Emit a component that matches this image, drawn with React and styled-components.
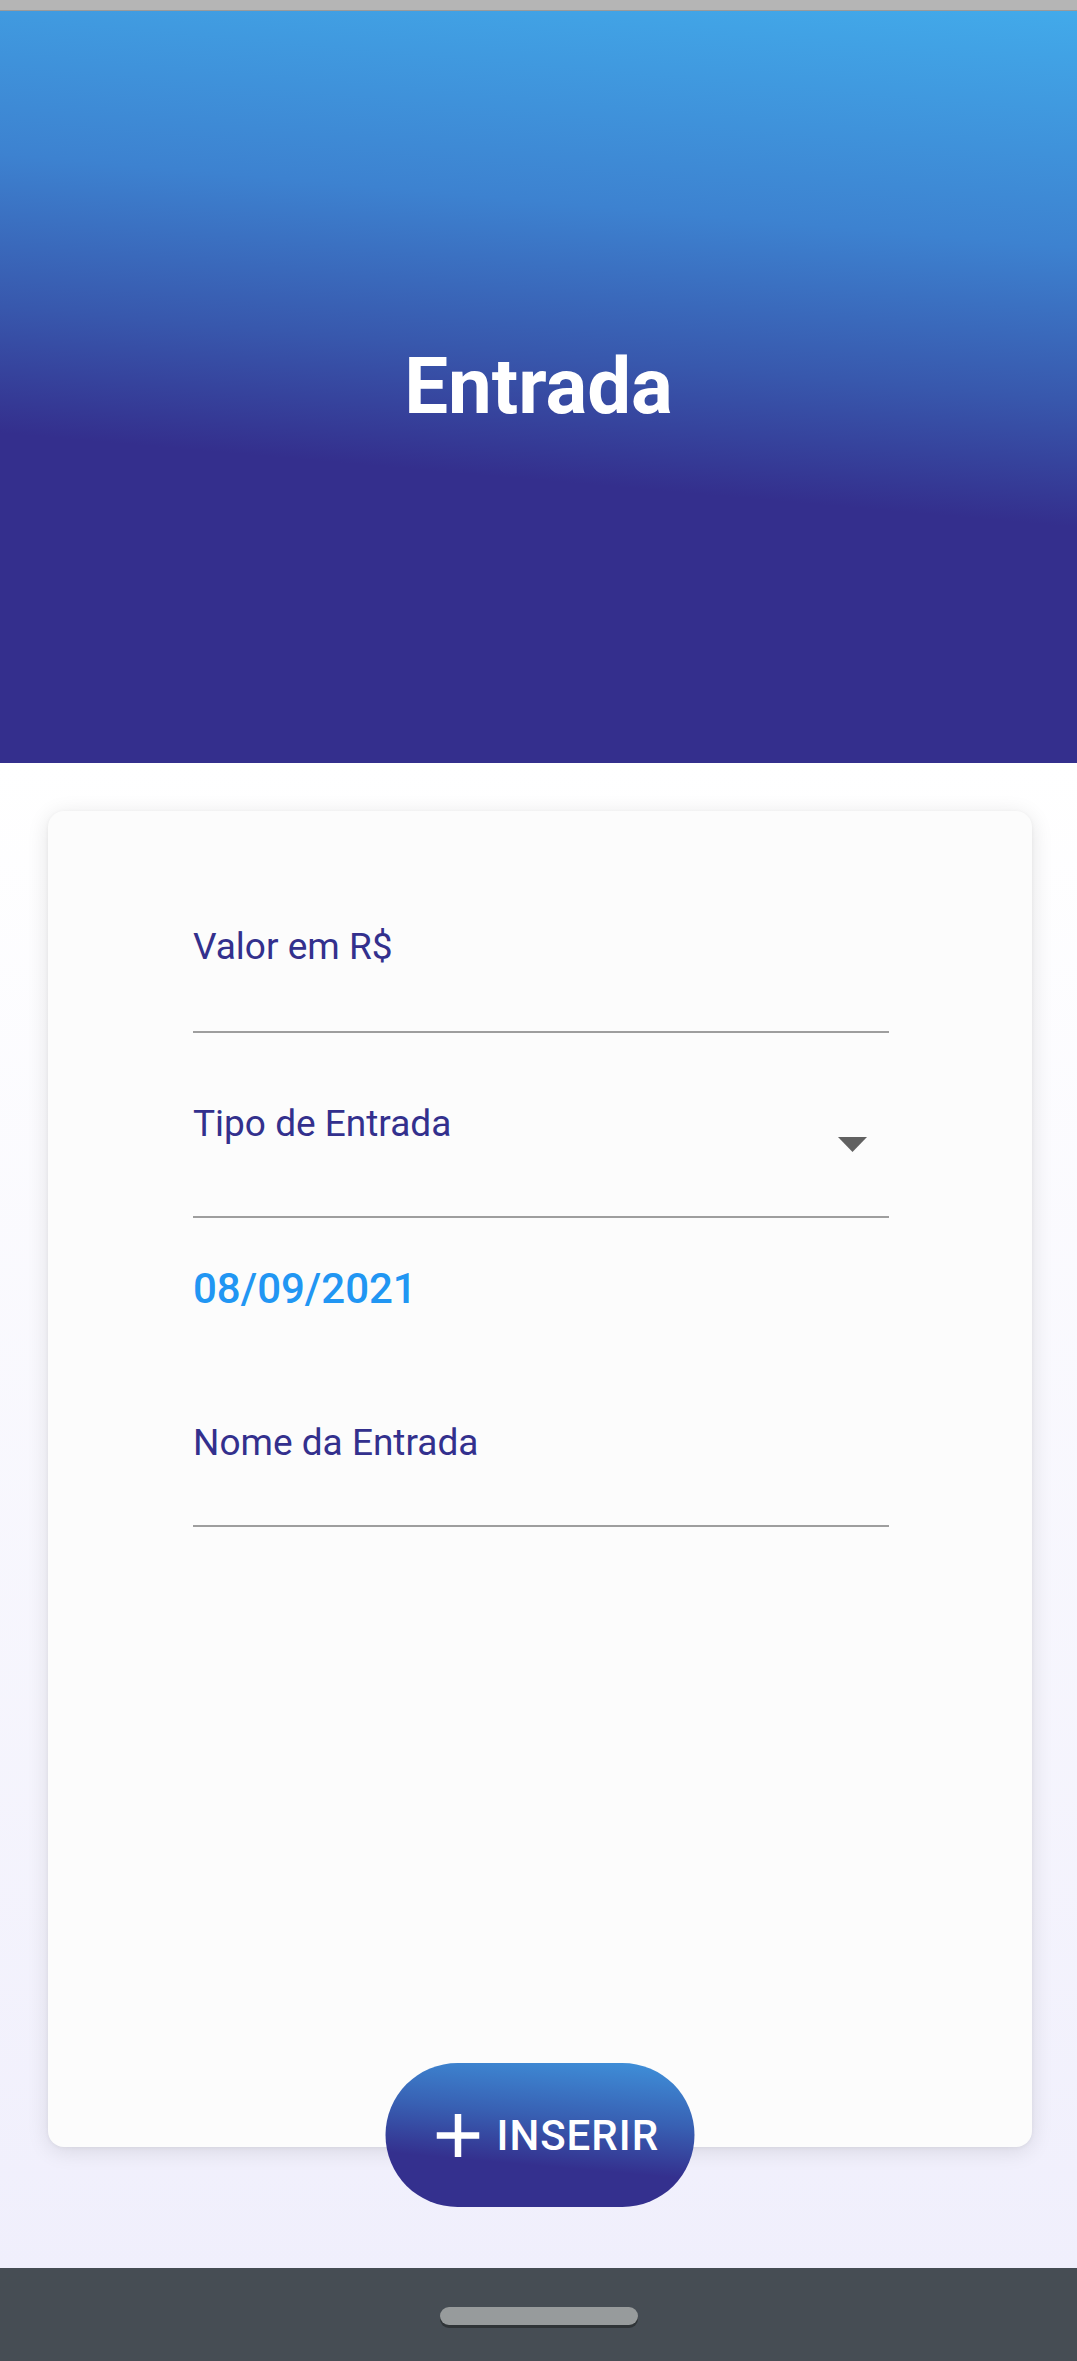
import React from "react";
import styled, { createGlobalStyle } from "styled-components";

const Global = createGlobalStyle`
  html, body { margin: 0; padding: 0; }
  body { font-family: "Roboto", "Liberation Sans", sans-serif; background: #ffffff; }
  * { box-sizing: border-box; }
`;

const Screen = styled.div`
  width: 1077px;
  height: 2361px;
  display: flex;
  flex-direction: column;
  overflow: hidden;
`;

const StatusStrip = styled.div`
  height: 11px;
  flex: none;
  background: #b5b5b5;
  border-bottom: 1px solid #9a9a9a;
`;

const Header = styled.header`
  height: 752px;
  flex: none;
  display: flex;
  align-items: center;
  justify-content: center;
  background: linear-gradient(185deg, #42aaea 0%, #3d82d0 28%, #3858ad 46%, #342f8d 61%, #342f8d 100%);
`;

const Title = styled.h1`
  margin: 0;
  color: #ffffff;
  font-family: "Roboto", sans-serif;
  font-weight: 700;
  font-size: 78px;
  line-height: 1;
`;

const Body = styled.main`
  flex: 1;
  padding: 48px 45px 0 48px;
  background: linear-gradient(180deg, #ffffff 0%, #f0effc 100%);
`;

const CardWrap = styled.div`
  position: relative;
  width: 984px;
`;

const Card = styled.section`
  height: 1336px;
  background: #fcfcfc;
  border-radius: 16px;
  box-shadow: 0 4px 22px rgba(0, 0, 0, 0.11), 0 1px 4px rgba(0, 0, 0, 0.05);
  padding: 114px 143px 0 145px;
  display: flex;
  flex-direction: column;
`;

const Field = styled.div`
  display: flex;
  flex-direction: column;
  margin-top: ${(p) => p.$top || 0}px;
`;

const FieldRow = styled.div`
  display: flex;
  align-items: flex-start;
  justify-content: space-between;
`;

const Label = styled.span`
  font-family: "Roboto", sans-serif;
  font-size: 37px;
  line-height: 44px;
  color: #33308d;
`;

const Underline = styled.div`
  height: 2px;
  background: #9e9e9e;
  margin-top: ${(p) => p.$gap}px;
`;

const Arrow = styled.svg`
  width: 29px;
  height: 15px;
  margin-top: 35px;
  margin-right: 22px;
  flex: none;
`;

const DateText = styled.div`
  margin-top: 46px;
  font-family: "Roboto", sans-serif;
  font-weight: 500;
  font-size: 42px;
  line-height: 50px;
  color: #2196f3;
`;

const InsertButton = styled.button`
  position: absolute;
  left: 50%;
  bottom: -60px;
  transform: translateX(-50%);
  width: 309px;
  height: 144px;
  border: none;
  border-radius: 72px;
  padding: 0 0 0 51px;
  display: flex;
  align-items: center;
  gap: 17px;
  background: linear-gradient(185deg, #3f92db 0%, #3860b3 38%, #34308e 68%, #34308e 100%);
  color: #ffffff;
  font-family: "Roboto", sans-serif;
  font-weight: 500;
  font-size: 42px;
  letter-spacing: 1px;
  cursor: pointer;
`;

const PlusIcon = styled.svg`
  width: 43px;
  height: 43px;
  flex: none;
`;

const NavBar = styled.nav`
  height: 93px;
  flex: none;
  background: #464d54;
  display: flex;
  justify-content: center;
  padding-top: 39px;
`;

const HomePill = styled.div`
  width: 198px;
  height: 18px;
  border-radius: 9px;
  background: #979b9c;
  box-shadow: 0 3px 0 #2f3437;
`;

export default function App() {
  return (
    <>
      <Global />
      <Screen>
        <StatusStrip />
        <Header>
          <Title>Entrada</Title>
        </Header>
        <Body>
          <CardWrap>
            <Card>
              <Field>
                <Label>Valor em R$</Label>
                <Underline $gap={62} />
              </Field>
              <Field $top={69}>
                <FieldRow>
                  <Label>Tipo de Entrada</Label>
                  <Arrow viewBox="0 0 29 15">
                    <path d="M0 0 L29 0 L14.5 15 Z" fill="#616161" />
                  </Arrow>
                </FieldRow>
                <Underline $gap={64} />
              </Field>
              <DateText>08/09/2021</DateText>
              <Field $top={107}>
                <Label>Nome da Entrada</Label>
                <Underline $gap={60} />
              </Field>
            </Card>
            <InsertButton>
              <PlusIcon viewBox="0 0 43 43">
                <path d="M21.5 0 V43 M0 21.5 H43" stroke="#ffffff" strokeWidth="6.5" />
              </PlusIcon>
              INSERIR
            </InsertButton>
          </CardWrap>
        </Body>
        <NavBar>
          <HomePill />
        </NavBar>
      </Screen>
    </>
  );
}
